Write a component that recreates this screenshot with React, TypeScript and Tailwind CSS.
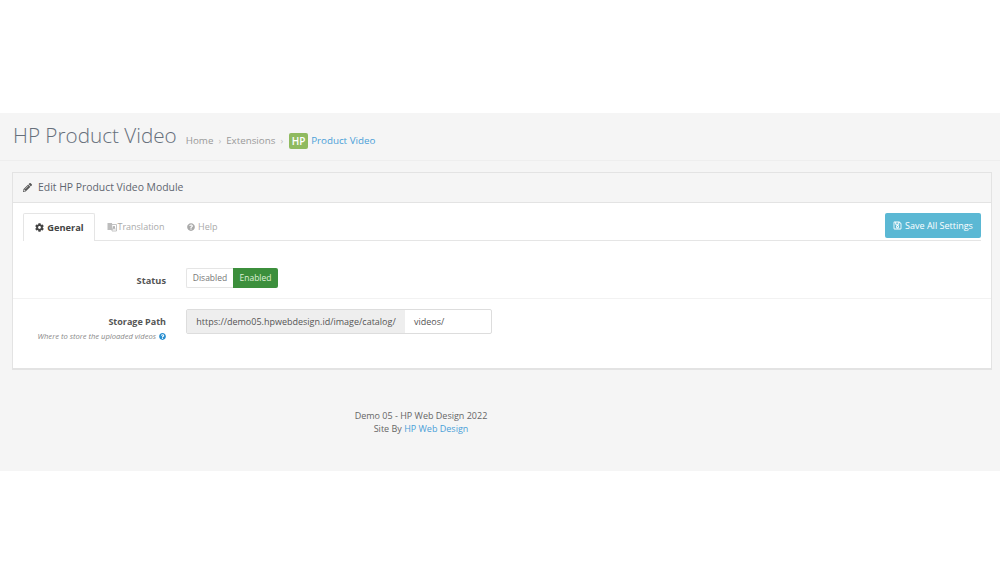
import { FaPencilAlt, FaCog, FaQuestionCircle, FaRegSave } from "react-icons/fa";

function LangIcon() {
  return (
    <svg width="10" height="10" viewBox="0 0 10 10" className="shrink-0">
      <path d="M0.5 1 H5 L5.5 8 H0.5 Z" fill="#bdbdbd" />
      <path d="M4.5 2.5 H9.5 V9 H5 Z" fill="none" stroke="#bdbdbd" strokeWidth="0.9" />
      <path d="M6 7.5 L7 4 L8 7.5" fill="none" stroke="#9a9a9a" strokeWidth="0.8" />
    </svg>
  );
}

export default function App() {
  return (
    <div className="min-h-[585px] bg-white font-['Open_Sans',sans-serif] text-[#666]">
      <div className="h-[113px]" />
      <div className="h-[358px] bg-[#f5f5f5]">
        <div className="flex h-[48px] items-end border-b border-[#eeeeee] pl-[13px] pb-[9px]">
          <h1 className="relative top-[-1px] mr-[9px] text-[20.7px] leading-[30px] font-light text-[#666f7b]">HP Product Video</h1>
          <div className="relative top-[-1px] flex h-[18px] items-center text-[9.8px] leading-[16px] text-[#999]">
            <span>Home</span>
            <span className="mx-[5px] text-[9px] text-[#bbb]">›</span>
            <span>Extensions</span>
            <span className="ml-[5px] mr-[6px] text-[9px] text-[#bbb]">›</span>
            <span className="mr-[3px] flex h-[16px] w-[19px] items-center justify-center rounded-[2px] bg-[#8fba5f] text-[10px] font-semibold text-white">HP</span>
            <span className="text-[#4a9fd8]">Product Video</span>
          </div>
        </div>
        <div className="ml-[12px] mr-[8px] mt-[11px] h-[198px] border border-b-2 border-[#e3e3e3] bg-white">
          <div className="flex h-[30px] items-center gap-[6px] border-b border-[#e3e3e3] bg-[#f5f5f5] pl-[10px] text-[10.4px] text-[#5f6670]">
            <FaPencilAlt className="text-[9px] text-[#555]" />
            <span>Edit HP Product Video Module</span>
          </div>
          <div className="mx-[10px] mt-[10px] flex h-[28px] items-end justify-between border-b border-[#e5e5e5]">
            <div className="flex h-[28px] items-stretch text-[9px]">
              <div className="relative top-[1px] flex w-[72px] items-center justify-center gap-[3px] rounded-t-[2px] border border-b-0 border-[#e5e5e5] bg-white pl-[1px] text-[9.25px] font-bold text-[#444]">
                <FaCog className="text-[9px]" />
                <span>General</span>
              </div>
              <div className="relative top-[1px] flex w-[82px] items-center justify-center gap-[0px] text-[#aaa]">
                <LangIcon />
                <span>Translation</span>
              </div>
              <div className="relative top-[1px] ml-[10px] flex items-center gap-[3px] text-[#aaa]">
                <FaQuestionCircle className="text-[8px]" />
                <span>Help</span>
              </div>
            </div>
            <div className="mb-[2px] flex h-[25px] w-[96px] items-center justify-center gap-[3px] rounded-[2px] bg-[#5bb8d4] text-[9px] text-white">
              <FaRegSave className="text-[9px]" />
              <span>Save All Settings</span>
            </div>
          </div>
          <div className="flex h-[58px] items-start border-b border-[#f2f2f2] pt-[27px]">
            <label className="w-[153px] pt-[6px] text-right text-[9.25px] font-bold leading-[13px] text-[#555]">Status</label>
            <div className="ml-[20px] flex h-[20px] text-[8.5px]">
              <span className="flex w-[47px] items-center justify-center rounded-l-[2px] border border-r-0 border-[#e5e5e5] text-[#777]">Disabled</span>
              <span className="flex w-[45px] items-center justify-center rounded-r-[2px] bg-[#3c8f3c] text-[#dff0d8]">Enabled</span>
            </div>
          </div>
          <div className="flex items-start pt-[10px]">
            <div className="w-[153px] text-right">
              <div className="pt-[6px] text-[9px] font-bold leading-[13px] text-[#555]">Storage Path</div>
              <div className="mt-[2px] flex items-center justify-end gap-[3px] text-[7.6px] italic leading-[12px] text-[#888]">
                <span>Where to store the uploaded videos</span>
                <FaQuestionCircle className="text-[7px] not-italic text-[#2a8fd0]" />
              </div>
            </div>
            <div className="ml-[20px] flex h-[25px] w-[306px] rounded-[2px] border border-[#dddddd] text-[9px] text-[#555]">
              <span className="flex w-[218px] items-center justify-center bg-[#eeeeee]">https://demo05.hpwebdesign.id/image/catalog/</span>
              <span className="flex flex-1 items-center pl-[9px]">videos/</span>
            </div>
          </div>
        </div>
        <div className="mt-[39px] w-[842px] text-center text-[9px] leading-[13px] text-[#666]">
          <div>Demo 05 - HP Web Design 2022</div>
          <div>Site By <span className="text-[#4a9fd8]">HP Web Design</span></div>
        </div>
      </div>
    </div>
  );
}
